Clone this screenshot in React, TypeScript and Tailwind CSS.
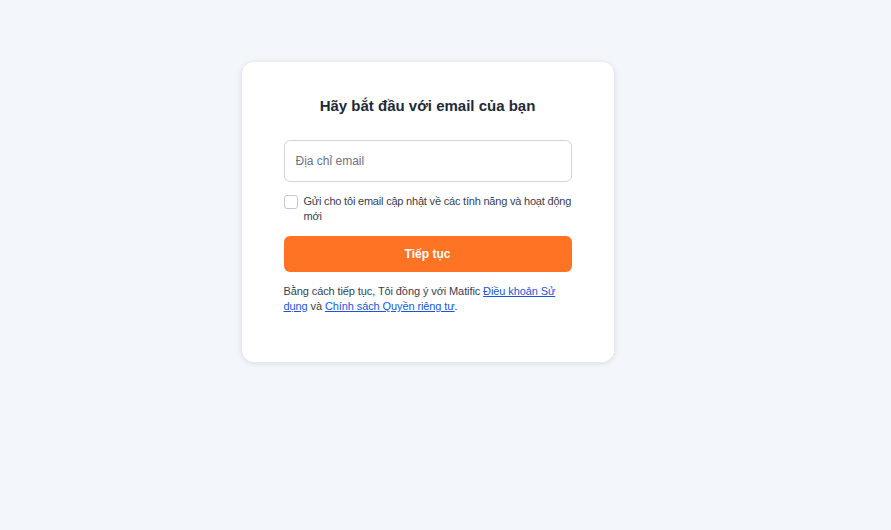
export default function App() {
  return (
    <div className="min-h-screen w-full bg-[#f3f6fb] font-['Liberation_Sans',Arial,sans-serif]">
      <div className="flex justify-center pt-[62px] pr-[36px]">
        <div className="w-[372px] rounded-[12px] bg-white px-[42px] pt-[32px] pb-[48px] shadow-[0_1px_6px_rgba(15,23,42,0.12)]">
          <h1 className="text-center text-[15px] leading-[24px] font-bold text-[#1f2937]">
            Hãy bắt đầu với email của bạn
          </h1>

          <input
            type="email"
            placeholder="Địa chỉ email"
            className="mt-[22px] block h-[42px] w-full rounded-[6px] border border-[#d1d5db] px-[11px] text-[12px] text-[#374151] placeholder:text-[#6b7280] outline-none"
          />

          <label className="mt-[12px] flex items-start gap-[6px] text-[11px] leading-[15px] tracking-[-0.2px] text-[#374151]">
            <span className="mt-[1px] h-[14px] w-[14px] shrink-0 rounded-[3px] border border-[#c4c9d1] bg-white" />
            <span>Gửi cho tôi email cập nhật về các tính năng và hoạt động mới</span>
          </label>

          <button className="mt-[12px] flex h-[36px] w-full items-center justify-center rounded-[6px] bg-[#ff7324] text-[12px] font-bold text-white">
            Tiếp tục
          </button>

          <p className="mt-[12px] text-[11px] leading-[15px] tracking-[-0.1px] text-[#374151]">
            Bằng cách tiếp tục, Tôi đồng ý với Matific{" "}
            <a className="text-[#1a56db] underline">Điều khoản Sử dụng</a> và{" "}
            <a className="text-[#1a56db] underline">Chính sách Quyền riêng tư</a>.
          </p>
        </div>
      </div>
    </div>
  );
}
